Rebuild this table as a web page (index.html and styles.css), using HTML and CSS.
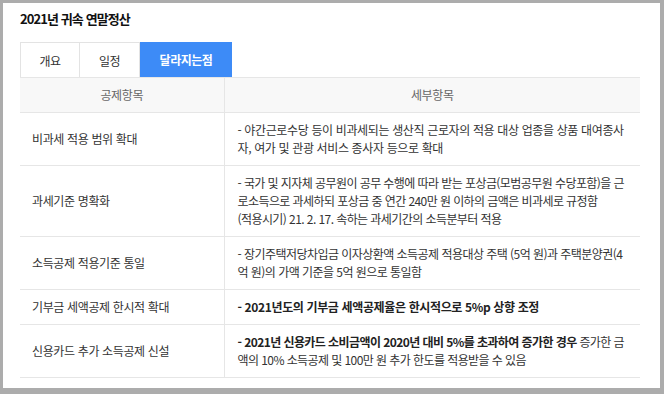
FILE: index.html
```html
<!DOCTYPE html>
<html lang="ko">
<head>
<meta charset="utf-8">
<title>2021년 귀속 연말정산</title>
<link rel="stylesheet" href="styles.css">
</head>
<body>
<div class="frame">
  <h1 class="title">2021년 귀속 연말정산</h1>
  <ul class="tabs">
    <li class="tab tab-1">개요</li>
    <li class="tab tab-2">일정</li>
    <li class="tab tab-3 active">달라지는점</li>
  </ul>
  <table class="grid">
    <colgroup><col class="col-1"><col class="col-2"></colgroup>
    <thead>
      <tr><th class="c1">공제항목</th><th class="c2">세부항목</th></tr>
    </thead>
    <tbody>
      <tr class="r1"><td class="c1">비과세 적용 범위 확대</td><td class="c2">- 야간근로수당 등이 비과세되는 생산직 근로자의 적용 대상 업종을 상품 대여종사자, 여가 및 관광 서비스 종사자 등으로 확대</td></tr>
      <tr class="r2"><td class="c1">과세기준 명확화</td><td class="c2 tight">- 국가 및 지자체 공무원이 공무 수행에 따라 받는 포상금(모범공무원 수당포함)을 근로소득으로 과세하되 포상금 중 연간 240만 원 이하의 금액은 비과세로 규정함<br>(적용시기) 21. 2. 17. 속하는 과세기간의 소득분부터 적용</td></tr>
      <tr class="r3"><td class="c1">소득공제 적용기준 통일</td><td class="c2 snug">- 장기주택저당차입금 이자상환액 소득공제 적용대상 주택 (5억 원)과 주택분양권(4억 원)의 가액 기준을 5억 원으로 통일함</td></tr>
      <tr class="r4"><td class="c1">기부금 세액공제 한시적 확대</td><td class="c2"><strong>- 2021년도의 기부금 세액공제율은 한시적으로 5%p 상향 조정</strong></td></tr>
      <tr class="r5"><td class="c1">신용카드 추가 소득공제 신설</td><td class="c2 tight"><strong>- 2021년 신용카드 소비금액이 2020년 대비 5%를 초과하여 증가한 경우</strong> 증가한 금액의 10% 소득공제 및 100만 원 추가 한도를 적용받을 수 있음</td></tr>
    </tbody>
  </table>
</div>
</body>
</html>
```
FILE: styles.css
```css
html, body {
  margin: 0;
  padding: 0;
  background: #fff;
}
body {
  font-family: "Noto Sans CJK KR", "Noto Sans", sans-serif;
  color: #333;
}
.frame {
  box-sizing: border-box;
  width: 664px;
  height: 394px;
  border-style: solid;
  border-color: #acacac;
  border-width: 3px 4px 6px 3px;
  padding: 0 0 0 17px;
}
.title {
  margin: 0;
  padding-top: 6px;
  height: 33px;
  line-height: 20px;
  font-size: 13px;
  font-weight: 700;
  color: #111;
  letter-spacing: -0.07em;
}
.tabs {
  list-style: none;
  margin: 0;
  padding: 0;
  display: flex;
  height: 35px;
}
.tab {
  box-sizing: border-box;
  height: 35px;
  display: flex;
  align-items: center;
  justify-content: center;
  font-size: 12px;
  color: #333;
  border: 1px solid #e3e3e3;
  border-bottom: 0;
  letter-spacing: -0.04em;
}
.tab-1 { width: 60px; }
.tab-2 { width: 60px; border-left: 0; }
.tab-3 { width: 92px; border: 0; }
.tab.active {
  background: #3d8bf7;
  color: #fff;
  font-weight: 700;
}
.grid {
  width: 620px;
  border-collapse: collapse;
  table-layout: fixed;
  font-size: 12px;
  letter-spacing: -0.03em;
}
.col-1 { width: 204px; }
.col-2 { width: 416px; }
.grid th, .grid td {
  border-top: 1px solid #e6e6e6;
  border-bottom: 1px solid #e6e6e6;
  padding: 8px 12px;
  line-height: 18px;
  vertical-align: middle;
  text-align: left;
}
.grid .c1 {
  border-right: 1px solid #e6e6e6;
}
.grid th {
  background: #f8f8f8;
  font-weight: 400;
  color: #666;
  text-align: center;
  height: 35px;
  box-sizing: border-box;
  padding: 0 12px;
}
.grid td.c1 {
  padding-left: 12px;
}
.grid td.c2 {
  padding-left: 13px;
  padding-right: 10px;
  word-break: break-all;
}
.grid td.tight {
  letter-spacing: -0.048em;
}
.grid td.snug {
  letter-spacing: -0.045em;
}
.grid strong {
  font-weight: 700;
  color: #222;
}
```
